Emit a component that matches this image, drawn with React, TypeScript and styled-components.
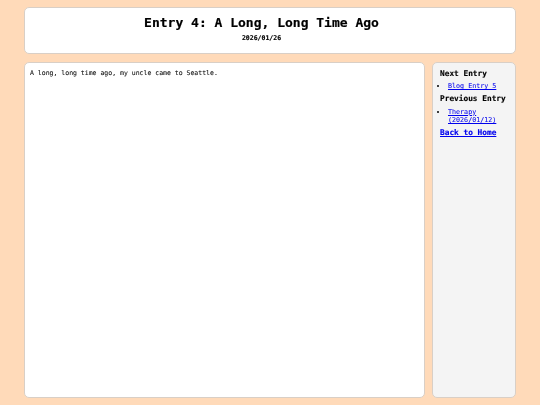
import React from "react";
import styled, { createGlobalStyle } from "styled-components";

const Global = createGlobalStyle`
  html, body { margin: 0; padding: 0; }
  body {
    background: #ffdab9;
    font-family: "DejaVu Sans Mono", "Liberation Mono", monospace;
    color: #000;
    -webkit-font-smoothing: antialiased;
  }
`;

const Page = styled.div`
  box-sizing: border-box;
  min-height: 100vh;
  height: 405px;
  padding: 7px 24px;
  display: flex;
  flex-direction: column;
  gap: 8px;
  will-change: transform;
`;

const Header = styled.header`
  background: #fff;
  border: 1px solid #d9cfc6;
  border-radius: 5px;
  padding: 7px 25px 11px 8px;
  text-align: center;
`;

const Title = styled.h1`
  margin: 0 0 3px;
  font-size: 13px;
  line-height: 16px;
  font-weight: bold;
  -webkit-text-stroke: 0.2px currentColor;
`;

const DateLine = styled.div`
  font-size: 6.5px;
  line-height: 8px;
  font-weight: bold;
  -webkit-text-stroke: 0.15px currentColor;
`;

const Body = styled.div`
  flex: 1;
  display: flex;
  gap: 7px;
  min-height: 0;
`;

const Article = styled.main`
  flex: 1;
  background: #fff;
  border: 1px solid #d9cfc6;
  border-radius: 5px;
  padding: 6px 5px;
  font-size: 6.5px;
  line-height: 8px;
  color: #111;
  -webkit-text-stroke: 0.08px currentColor;
`;

const Paragraph = styled.p`
  margin: 0;
`;

const Sidebar = styled.aside`
  box-sizing: border-box;
  width: 84px;
  flex: none;
  background: #f4f4f4;
  border: 1px solid #d9cfc6;
  border-radius: 5px;
  padding: 6px 7px;
`;

const SideHeading = styled.h3`
  margin: 0;
  font-size: 7.8px;
  line-height: 9.5px;
  font-weight: bold;
  -webkit-text-stroke: 0.15px currentColor;
`;

const List = styled.ul`
  margin: 3.8px 0 4px;
  padding-left: 8px;
  font-size: 6.7px;
  line-height: 8px;
`;

const Item = styled.li`
  margin: 0;
`;

const Link = styled.a`
  color: #0000ee;
  -webkit-text-stroke: 0.05px currentColor;
`;

const HomeLink = styled.a`
  display: block;
  color: #0000ee;
  font-weight: bold;
  font-size: 7.8px;
  line-height: 9.5px;
  -webkit-text-stroke: 0.15px currentColor;
`;

export default function App() {
  return (
    <>
      <Global />
      <Page>
        <Header>
          <Title>Entry 4: A Long, Long Time Ago</Title>
          <DateLine>2026/01/26</DateLine>
        </Header>
        <Body>
          <Article>
            <Paragraph>A long, long time ago, my uncle came to Seattle.</Paragraph>
          </Article>
          <Sidebar>
            <SideHeading>Next Entry</SideHeading>
            <List>
              <Item>
                <Link href="#">Blog Entry 5</Link>
              </Item>
            </List>
            <SideHeading>Previous Entry</SideHeading>
            <List>
              <Item>
                <Link href="#">Therapy (2026/01/12)</Link>
              </Item>
            </List>
            <HomeLink href="#">Back to Home</HomeLink>
          </Sidebar>
        </Body>
      </Page>
    </>
  );
}
